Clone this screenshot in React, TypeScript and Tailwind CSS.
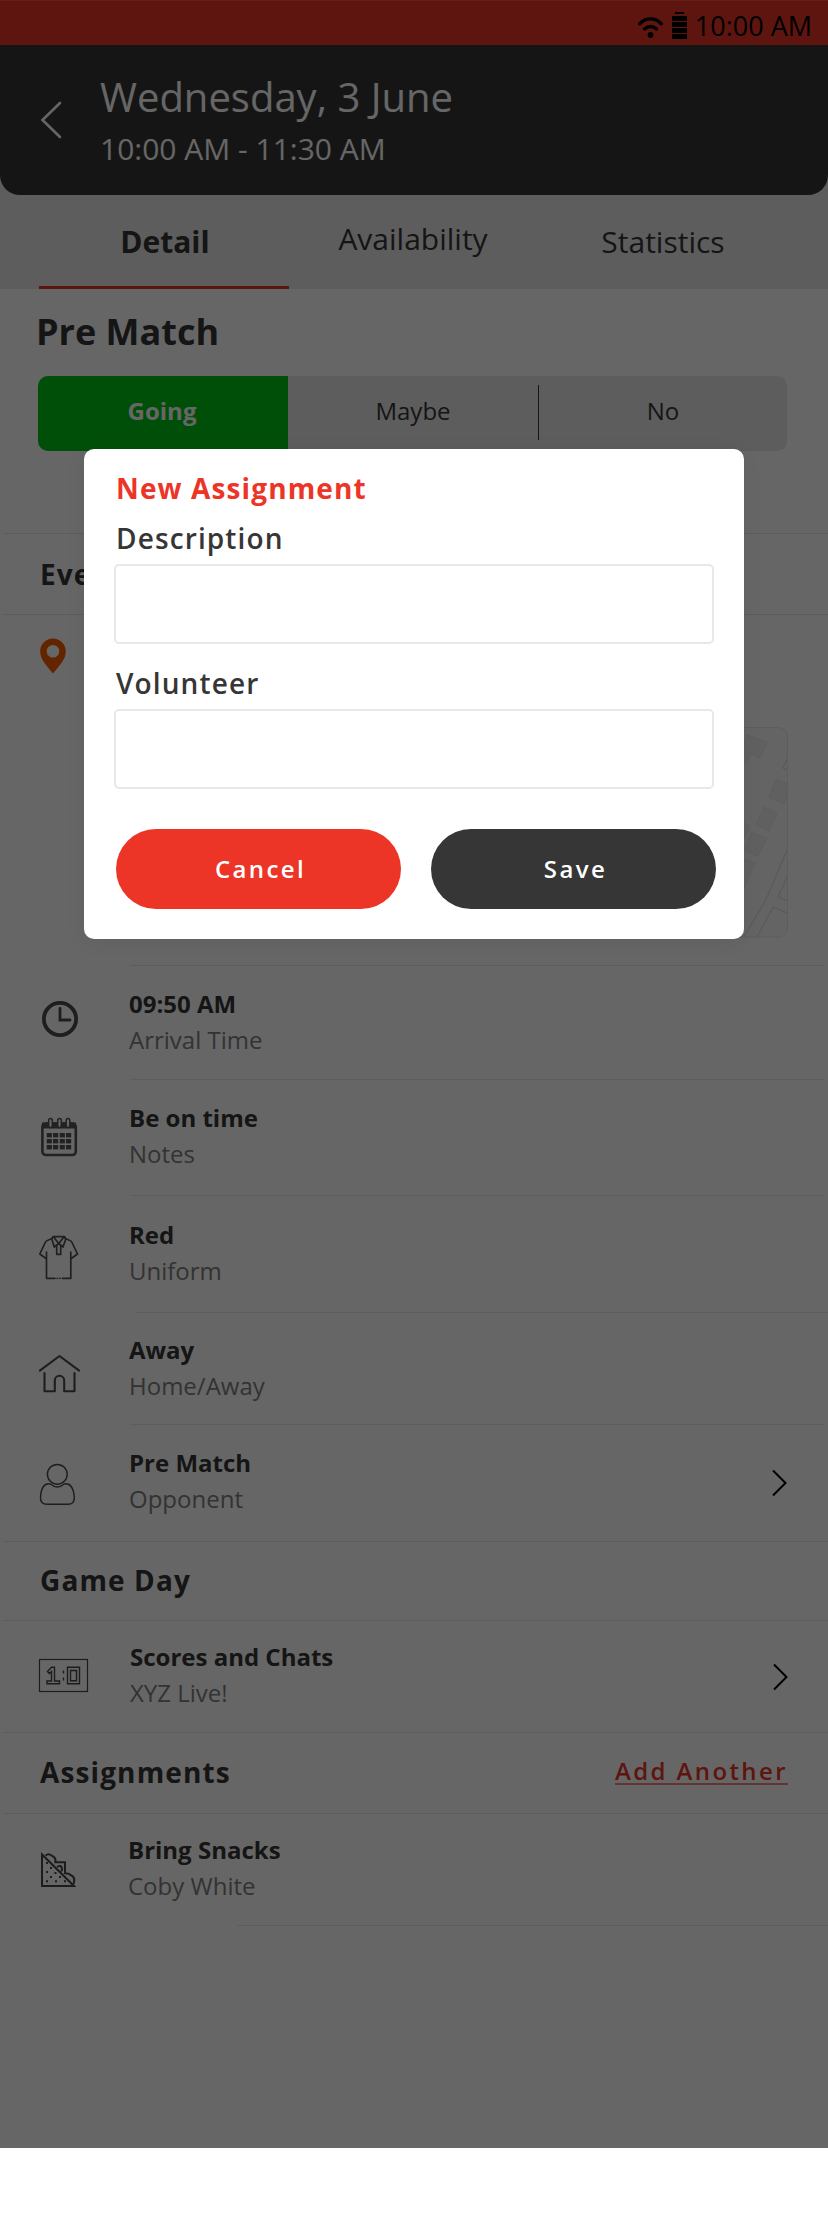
import React from "react";

const Status = () => (
  <div className="flex h-[45px] items-start justify-end border-t border-[#ee503c] bg-[#ec3527] pr-[16px]">
    <svg width="58" height="44" viewBox="634 1 58 44" className="shrink-0">
      <g fill="none" stroke="#000" strokeWidth="3.400" strokeLinecap="round">
        <path d="M639.700 23.700C646 17.200 655 17.200 661.300 23.700" />
        <path d="M644.500 29C648.500 25.600 652.500 25.600 656.500 29" />
      </g>
      <circle cx="650.500" cy="35" r="2.900" />
      <path d="M675 12h9v2h-9zM672 16h15v5h-15zM672 22h15v5h-15zM672 28h15v5h-15zM672 34h15v5h-15z" />
    </svg>
    <span className="ml-[3px] mt-[6px] text-[27px] leading-[37px] text-black">10:00 AM</span>
  </div>
);

const Chevron = ({ className }: { className: string }) => (
  <svg width="18" height="28" viewBox="0 0 18 28" className={className}>
    <path d="M2 1.500L14.500 14L2 26.500" fill="none" stroke="#000" strokeWidth="2" />
  </svg>
);

const Clock = () => (
  <svg width="129" height="113" viewBox="0 966 129 113" fill="none" stroke="#4c4c4c">
    <circle cx="60" cy="1019" r="16.100" strokeWidth="3.800" />
    <path d="M60 1008.500V1020H70" strokeWidth="2.800" strokeLinecap="round" />
  </svg>
);

const Calendar = () => (
  <svg width="129" height="115" viewBox="0 1080 129 115">
    <rect x="42.400" y="1123.500" width="33.400" height="31.500" rx="3.500" fill="none" stroke="#565656" strokeWidth="2.600" />
    <path d="M42 1122.500h34v6h-34z" fill="#565656" />
    <g fill="#fff" stroke="#565656" strokeWidth="1.500">
      <rect x="48.700" y="1118.500" width="3.600" height="9" rx="1.800" />
      <rect x="57.700" y="1118.500" width="3.600" height="9" rx="1.800" />
      <rect x="66.200" y="1118.500" width="3.600" height="9" rx="1.800" />
    </g>
    <g fill="#565656">
      {[1133, 1139, 1145].map((y) =>
        [46.7, 53, 59.7, 66].map((x) => <rect key={`${x}-${y}`} x={x} y={y} width="5.200" height="4.400" />)
      )}
    </g>
  </svg>
);

const Shirt = () => (
  <svg width="129" height="116" viewBox="0 1196 129 116" fill="none" stroke="#505050" strokeWidth="1.700" strokeLinejoin="round" strokeLinecap="round">
    <path d="M46.500 1252V1278.300H55M62.500 1278.300H70.800V1252" />
    <path d="M57.200 1278.300h.2M59.800 1278.300h.2" />
    <path d="M46 1258.500L39.800 1254L45.500 1242Q46 1240.800 52 1238.500M71.300 1258.500L77.500 1254L71.800 1242Q71.300 1240.800 65.300 1238.500" />
    <path d="M53 1236.700H64.500L65.800 1239L63 1247L58.700 1243.500L54.300 1247L51.800 1239ZM54 1237.500L58.700 1243.500L63.500 1237.500" />
    <path d="M56.700 1245.500V1254.300H60.700V1245.500" />
  </svg>
);

const House = () => (
  <svg width="129" height="111" viewBox="0 1313 129 111" fill="none" stroke="#4c4c4c" strokeWidth="2.100" strokeLinecap="round" strokeLinejoin="round">
    <path d="M39.800 1370.700L59.500 1356L79.200 1370.700" />
    <path d="M44.500 1373V1391.200H54.800V1380.500A4.700 4.700 0 0 1 64.200 1380.500V1391.200H74.500V1373" />
  </svg>
);

const Person = () => (
  <svg width="129" height="116" viewBox="0 1425 129 116" fill="none" stroke="#4c4c4c" strokeWidth="1.500">
    <circle cx="57.300" cy="1474.300" r="9.900" />
    <path d="M50.500 1484Q57.300 1490 64.200 1484Q73.500 1482.500 74.300 1498Q74.300 1504.300 68 1504.300H47Q40.500 1504.300 40.500 1498Q41 1482.500 50.500 1484Z" />
  </svg>
);

const Scoreboard = () => (
  <svg width="129" height="111" viewBox="0 1621 129 111" fill="none" stroke="#464646" strokeWidth="1.400">
    <rect x="39.500" y="1659.500" width="48" height="32" strokeWidth="1.200" />
    <path d="M47.500 1671.500L51.500 1667.300H54.500V1681H59.500V1683.700H47V1681H51.500V1671.500L49.300 1673.500Z" />
    <path d="M63.500 1670.500V1673.500M63.500 1677.500V1680.500" />
    <path d="M67.500 1667.300H79.500V1683.700H67.500ZM70.500 1670.500H76.500V1680.700H70.500Z" />
  </svg>
);

const Sandwich = () => (
  <svg width="129" height="111" viewBox="0 1814 129 111" fill="none" stroke="#464646" strokeWidth="2">
    <path d="M42 1854.500V1886H74Z" />
    <path d="M45.500 1855.500Q49 1852.500 53 1856.500Q56.500 1858 55 1863M54.500 1862.200H65V1874" />
    <path d="M57 1867Q61 1864.500 62 1868Q62.500 1869.500 61 1871.500M65.500 1874Q68 1872.500 70.500 1875Q76 1877 73.500 1884" />
    <path d="M46 1863h2M50 1868h2M46 1872h2M54.500 1873h2M50 1877h2M59 1877h2M46 1881.300h2M55 1881.300h2M64 1881.300h2" />
  </svg>
);

const Heading = ({ box, pad, children }: { box: string; pad: string; children: React.ReactNode }) => (
  <div className={`flex flex-col ${box}`}>
    <div className={`flex flex-1 items-start justify-between pl-[40px] pr-[40px] text-[28px] font-bold leading-[40px] tracking-[1.12px] ${pad}`}>
      {children}
    </div>
    <div className="ml-[3px] h-px bg-[#e8e8e8]" />
  </div>
);

type RowProps = {
  box: string;
  pad: string;
  line: string;
  icon: React.ReactNode;
  title: string;
  sub: string;
  action?: React.ReactNode;
};

const Row = ({ box, pad, line, icon, title, sub, action }: RowProps) => (
  <div className={`flex flex-col ${box}`}>
    <div className="flex min-h-0 flex-1">
      <div className="w-[129px] shrink-0">{icon}</div>
      <div className={`flex-1 text-[24px] leading-[36px] ${pad}`}>
        <p className="font-bold">{title}</p>
        <p className="text-[#808080]">{sub}</p>
      </div>
      {action}
    </div>
    <div className={`h-px bg-[#e8e8e8] ${line}`} />
  </div>
);

const MapView = () => (
  <svg width="660" height="211" viewBox="128 727 660 211">
    <clipPath id="mapClip">
      <rect x="128.500" y="727.500" width="659" height="209.500" rx="9" />
    </clipPath>
    <g clipPath="url(#mapClip)">
      <rect x="128" y="727" width="660" height="211" fill="#fafafa" />
      <g fill="#f0f0f0" stroke="#e6e6ea" strokeWidth=".8">
        <path d="M747 735L767 742L760 758L751 754L746 763L738 760Z" />
        <path d="M776 779L792 785L784 804L769 797Z" />
        <path d="M764 807L777 813L769 831L756 825Z" />
        <path d="M752 832L767 838L758 856L744 850Z" />
        <path d="M742 858L755 863L742 893Z" />
        <path d="M742 822L750 826L744 838Z" />
      </g>
      <g fill="none" stroke="#e0e0e0" strokeWidth="1.300">
        <path d="M790 843L768 895Q764 904 743 938" />
        <path d="M790 871L778 897L790 902" />
        <path d="M757 937L773 907L790 914" />
        <path d="M790 752L783 768L790 772" />
      </g>
    </g>
    <rect x="128.500" y="727.500" width="659" height="209.500" rx="9" fill="none" stroke="#e8e8e8" />
  </svg>
);

const Modal = () => (
  <div className="absolute left-[84px] top-[449px] flex h-[490px] w-[660px] flex-col rounded-[10px] bg-white px-[30px] pt-[19px] text-[28px] leading-[40px] tracking-[1.12px] text-[#363636] shadow-[0_3px_20px_rgba(0,0,0,0.06)]">
    <h2 className="pl-[2px] font-bold text-[#ec3527]">New Assignment</h2>
    <label className="mt-[10px] pl-[2px] font-semibold">Description</label>
    <input className="mt-[6px] h-[80px] w-[600px] rounded-[5px] border-2 border-[#e8e8e8]" />
    <label className="mt-[19px] pl-[2px] font-semibold">Volunteer</label>
    <input className="mt-[6px] h-[80px] w-[600px] rounded-[5px] border-2 border-[#e8e8e8]" />
    <div className="ml-[2px] mt-[40px] flex gap-[30px] text-[24px] font-semibold tracking-[2.4px] text-white">
      <button className="h-[80px] w-[285px] shrink-0 rounded-[40px] bg-[#ec3527] pl-[4px]">Cancel</button>
      <button className="h-[80px] w-[285px] shrink-0 rounded-[40px] bg-[#363636] pl-[4px]">Save</button>
    </div>
  </div>
);

export default function App() {
  return (
    <div className="h-[2236px] w-[828px] bg-white font-['Open_Sans','Noto_Sans',sans-serif] text-[#363636]">
      <div className="relative h-[2148px] overflow-hidden">
        <Status />
        <div className="bg-[#e8e8e8]">
          <header className="flex h-[150px] rounded-b-[20px] bg-[#363636] text-white">
            <svg width="99" height="150" viewBox="0 45 99 150">
              <path d="M60 103L42.500 120L60 137" fill="none" stroke="#fff" strokeWidth="2.600" strokeLinecap="round" />
            </svg>
            <div className="pt-[25px]">
              <h1 className="ml-[1px] text-[40px] leading-[54px]">Wednesday, 3 June</h1>
              <p className="ml-[1px] mt-[4px] text-[30px] leading-[42px]">10:00 AM - 11:30 AM</p>
            </div>
          </header>
          <nav className="flex h-[94px] pl-[39px] text-center text-[30px] leading-[40px]">
            <div className="w-[250px] border-b-[3px] border-[#ec3527] pl-[2px] pt-[27px] font-bold">Detail</div>
            <div className="w-[248px] pt-[24px]">Availability</div>
            <div className="w-[252px] pt-[27px]">Statistics</div>
          </nav>
        </div>
        <div className="h-[245px] pt-[18px]">
          <h2 className="pl-[36px] text-[36px] font-bold leading-[50px]">Pre Match</h2>
          <div className="ml-[38px] mt-[19px] flex h-[75px] w-[749px] items-start overflow-hidden rounded-[10px] bg-[#e8e8e8] text-center text-[24px] leading-[69px]">
            <div className="h-full w-[250px] bg-[#00c514] pr-[2px] font-bold text-white">Going</div>
            <div className="w-[250px]">Maybe</div>
            <div className="mt-[9px] h-[55px] w-px bg-[#363636]" />
            <div className="w-[248px]">No</div>
          </div>
          <div className="ml-[3px] mt-[82px] h-px bg-[#e8e8e8]" />
        </div>
        <Heading box="h-[81px]" pad="pt-[20px]">Event Details</Heading>
        <div className="flex h-[351px] flex-col">
          <div className="flex flex-1 items-start">
            <svg width="128" height="100" viewBox="0 615 128 100" className="shrink-0">
              <path fillRule="evenodd" fill="#f85a00" d="M53 638.500C46 638.500 40.200 644 40.200 651.500C40.200 659 46 665 53 673.500C60 665 65.800 659 65.800 651.500C65.800 644 60 638.500 53 638.500ZM53 645A6.300 6.300 0 1 1 53 657.600A6.300 6.300 0 1 1 53 645Z" />
            </svg>
            <div className="pt-[112px]"><MapView /></div>
          </div>
          <div className="ml-[130px] mr-[3px] h-px bg-[#e8e8e8]" />
        </div>
        <Row box="h-[114px]" pad="pt-[20px]" line="ml-[130px] mr-[3px]" icon={<Clock />} title="09:50 AM" sub="Arrival Time" />
        <Row box="h-[116px]" pad="pt-[20px]" line="ml-[131px] mr-[3px]" icon={<Calendar />} title="Be on time" sub="Notes" />
        <Row box="h-[117px]" pad="pt-[21px]" line="ml-[135px]" icon={<Shirt />} title="Red" sub="Uniform" />
        <Row box="h-[112px]" pad="pt-[19px]" line="ml-[130px] mr-[3px]" icon={<House />} title="Away" sub="Home/Away" />
        <Row box="h-[117px]" pad="pt-[20px]" line="ml-[3px]" icon={<Person />} title="Pre Match" sub="Opponent"
          action={<Chevron className="mr-[39px] mt-[44px]" />} />
        <Heading box="h-[79px]" pad="pt-[18px]">Game Day</Heading>
        <Row box="h-[112px]" pad="pt-[18px] pl-[1px]" line="ml-[3px]" icon={<Scoreboard />} title="Scores and Chats" sub="XYZ Live!"
          action={<Chevron className="mr-[38px] mt-[42px]" />} />
        <Heading box="h-[81px]" pad="pt-[19px]">
          <span>Assignments</span>
          <a className="mt-[4px] h-[29px] border-b-2 border-[#ec3527]/60 text-[24px] font-semibold leading-[30px] tracking-[2.4px] text-[#ec3527]">Add Another</a>
        </Heading>
        <Row box="h-[112px]" pad="pt-[18px] -ml-[1px]" line="ml-[237px]" icon={<Sandwich />} title="Bring Snacks" sub="Coby White" />
        <div className="absolute inset-0 bg-black/60" />
        <Modal />
      </div>
    </div>
  );
}
